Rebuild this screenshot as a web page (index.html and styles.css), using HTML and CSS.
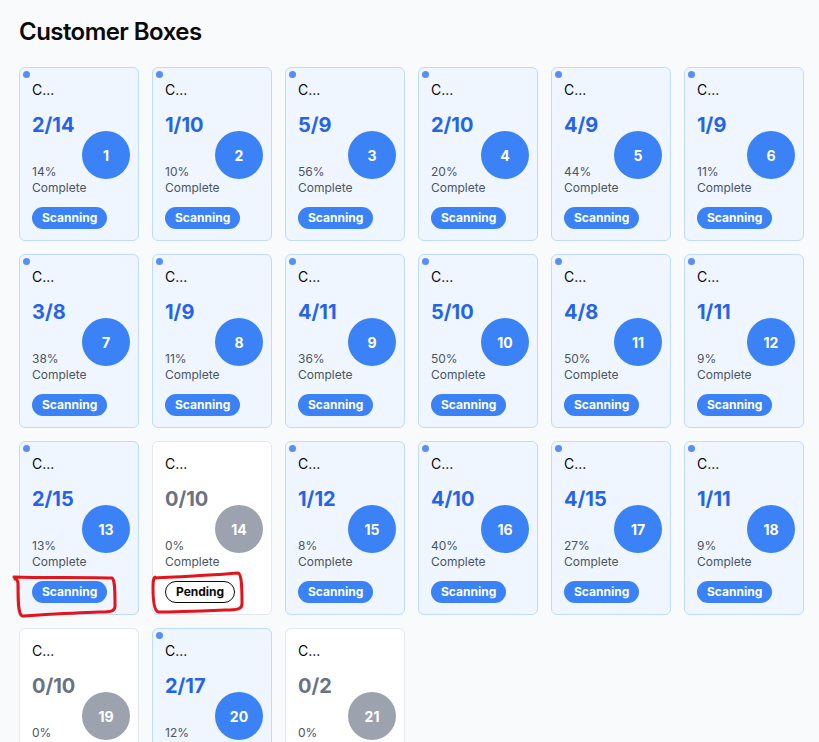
FILE: index.html
```html
<!DOCTYPE html>
<html lang="en">
<head>
<meta charset="utf-8">
<title>Customer Boxes</title>
<link rel="stylesheet" href="styles.css">
</head>
<body>
<main class="page">
  <h1 class="title">Customer Boxes</h1>
  <div class="grid">
    <div class="card active"><span class="dot"></span><div class="name">C...</div><div class="frac">2/14</div><div class="pct">14%<br>Complete</div><span class="badge scanning">Scanning</span><span class="num">1</span></div>
    <div class="card active"><span class="dot"></span><div class="name">C...</div><div class="frac">1/10</div><div class="pct">10%<br>Complete</div><span class="badge scanning">Scanning</span><span class="num">2</span></div>
    <div class="card active"><span class="dot"></span><div class="name">C...</div><div class="frac">5/9</div><div class="pct">56%<br>Complete</div><span class="badge scanning">Scanning</span><span class="num">3</span></div>
    <div class="card active"><span class="dot"></span><div class="name">C...</div><div class="frac">2/10</div><div class="pct">20%<br>Complete</div><span class="badge scanning">Scanning</span><span class="num">4</span></div>
    <div class="card active"><span class="dot"></span><div class="name">C...</div><div class="frac">4/9</div><div class="pct">44%<br>Complete</div><span class="badge scanning">Scanning</span><span class="num">5</span></div>
    <div class="card active"><span class="dot"></span><div class="name">C...</div><div class="frac">1/9</div><div class="pct">11%<br>Complete</div><span class="badge scanning">Scanning</span><span class="num">6</span></div>

    <div class="card active"><span class="dot"></span><div class="name">C...</div><div class="frac">3/8</div><div class="pct">38%<br>Complete</div><span class="badge scanning">Scanning</span><span class="num">7</span></div>
    <div class="card active"><span class="dot"></span><div class="name">C...</div><div class="frac">1/9</div><div class="pct">11%<br>Complete</div><span class="badge scanning">Scanning</span><span class="num">8</span></div>
    <div class="card active"><span class="dot"></span><div class="name">C...</div><div class="frac">4/11</div><div class="pct">36%<br>Complete</div><span class="badge scanning">Scanning</span><span class="num">9</span></div>
    <div class="card active"><span class="dot"></span><div class="name">C...</div><div class="frac">5/10</div><div class="pct">50%<br>Complete</div><span class="badge scanning">Scanning</span><span class="num">10</span></div>
    <div class="card active"><span class="dot"></span><div class="name">C...</div><div class="frac">4/8</div><div class="pct">50%<br>Complete</div><span class="badge scanning">Scanning</span><span class="num">11</span></div>
    <div class="card active"><span class="dot"></span><div class="name">C...</div><div class="frac">1/11</div><div class="pct">9%<br>Complete</div><span class="badge scanning">Scanning</span><span class="num">12</span></div>

    <div class="card active"><span class="dot"></span><div class="name">C...</div><div class="frac">2/15</div><div class="pct">13%<br>Complete</div><span class="badge scanning">Scanning</span><span class="num">13</span></div>
    <div class="card pending"><div class="name">C...</div><div class="frac">0/10</div><div class="pct">0%<br>Complete</div><span class="badge waiting">Pending</span><span class="num">14</span></div>
    <div class="card active"><span class="dot"></span><div class="name">C...</div><div class="frac">1/12</div><div class="pct">8%<br>Complete</div><span class="badge scanning">Scanning</span><span class="num">15</span></div>
    <div class="card active"><span class="dot"></span><div class="name">C...</div><div class="frac">4/10</div><div class="pct">40%<br>Complete</div><span class="badge scanning">Scanning</span><span class="num">16</span></div>
    <div class="card active"><span class="dot"></span><div class="name">C...</div><div class="frac">4/15</div><div class="pct">27%<br>Complete</div><span class="badge scanning">Scanning</span><span class="num">17</span></div>
    <div class="card active"><span class="dot"></span><div class="name">C...</div><div class="frac">1/11</div><div class="pct">9%<br>Complete</div><span class="badge scanning">Scanning</span><span class="num">18</span></div>

    <div class="card pending"><div class="name">C...</div><div class="frac">0/10</div><div class="pct">0%<br>Complete</div><span class="badge waiting">Pending</span><span class="num">19</span></div>
    <div class="card active"><span class="dot"></span><div class="name">C...</div><div class="frac">2/17</div><div class="pct">12%<br>Complete</div><span class="badge scanning">Scanning</span><span class="num">20</span></div>
    <div class="card pending"><div class="name">C...</div><div class="frac">0/2</div><div class="pct">0%<br>Complete</div><span class="badge waiting">Pending</span><span class="num">21</span></div>
  </div>
</main>
<svg class="marks" width="819" height="742" viewBox="0 0 819 742" aria-hidden="true">
  <path d="M14 577 C40 578, 90 577, 112 578 C115 580, 115 590, 115 606 C115 611, 112 612, 100 612 C70 613, 40 615, 22 616 C18 614, 18 600, 18 585 C18 581, 17 579, 15 579" />
  <path d="M154 578 C175 577, 215 575, 238 573 C242 574, 242 590, 242 604 C242 609, 238 610, 225 610 C200 611, 175 612, 158 612 C154 610, 153 600, 153 588 C153 582, 153 579, 155 577" />
</svg>
</body>
</html>
```
FILE: styles.css
```css
html, body {
  margin: 0;
  padding: 0;
}

body {
  background: #f8fafc;
  font-family: Inter, "Noto Sans", "Liberation Sans", sans-serif;
  color: #111827;
  position: relative;
  min-height: 742px;
}

.page {
  padding: 16px 19px 19px;
}

.title {
  margin: 0 0 19px;
  font-size: 24px;
  line-height: 32px;
  font-weight: 600;
  letter-spacing: -0.55px;
  color: #0a0a0a;
}

.grid {
  display: grid;
  grid-template-columns: repeat(6, 120px);
  gap: 13px;
}

.card {
  position: relative;
  box-sizing: border-box;
  border: 1px solid #bfdbfe;
  background: #eff6ff;
  border-radius: 6px;
  padding: 12px 12px 11px;
}

.card.pending {
  background: #ffffff;
  border-color: #e5e7eb;
}

.dot {
  position: absolute;
  left: 3px;
  top: 3px;
  width: 7px;
  height: 7px;
  border-radius: 50%;
  background: #5a8ef5;
}

.name {
  font-size: 14px;
  line-height: 20px;
  color: #0a0a0a;
}

.frac {
  margin-top: 11px;
  font-size: 20px;
  line-height: 28px;
  font-weight: 700;
  color: #2563eb;
}

.pending .frac {
  color: #6b7280;
}

.pct {
  margin-top: 25px;
  font-size: 12px;
  line-height: 16px;
  color: #4b5563;
}

.badge {
  display: inline-block;
  margin-top: 11px;
  padding: 3px 10px;
  font-size: 12px;
  line-height: 16px;
  font-weight: 700;
  border-radius: 999px;
}

.badge.scanning {
  background: #3b82f6;
  color: #ffffff;
}

.badge.waiting {
  background: #ffffff;
  color: #0a0a0a;
  border: 1px solid #0a0a0a;
  padding: 2px 10px;
}

.num {
  position: absolute;
  right: 8px;
  top: calc(50% + 1px);
  transform: translateY(-50%);
  width: 48px;
  height: 48px;
  border-radius: 50%;
  background: #3b82f6;
  color: #ffffff;
  font-size: 14px;
  font-weight: 700;
  display: flex;
  align-items: center;
  justify-content: center;
}

.pending .num {
  background: #9ca3af;
}

.marks {
  position: absolute;
  left: 0;
  top: 0;
  pointer-events: none;
  fill: none;
  stroke: #e3141b;
  stroke-width: 3;
  stroke-linecap: round;
  stroke-linejoin: round;
}
```
